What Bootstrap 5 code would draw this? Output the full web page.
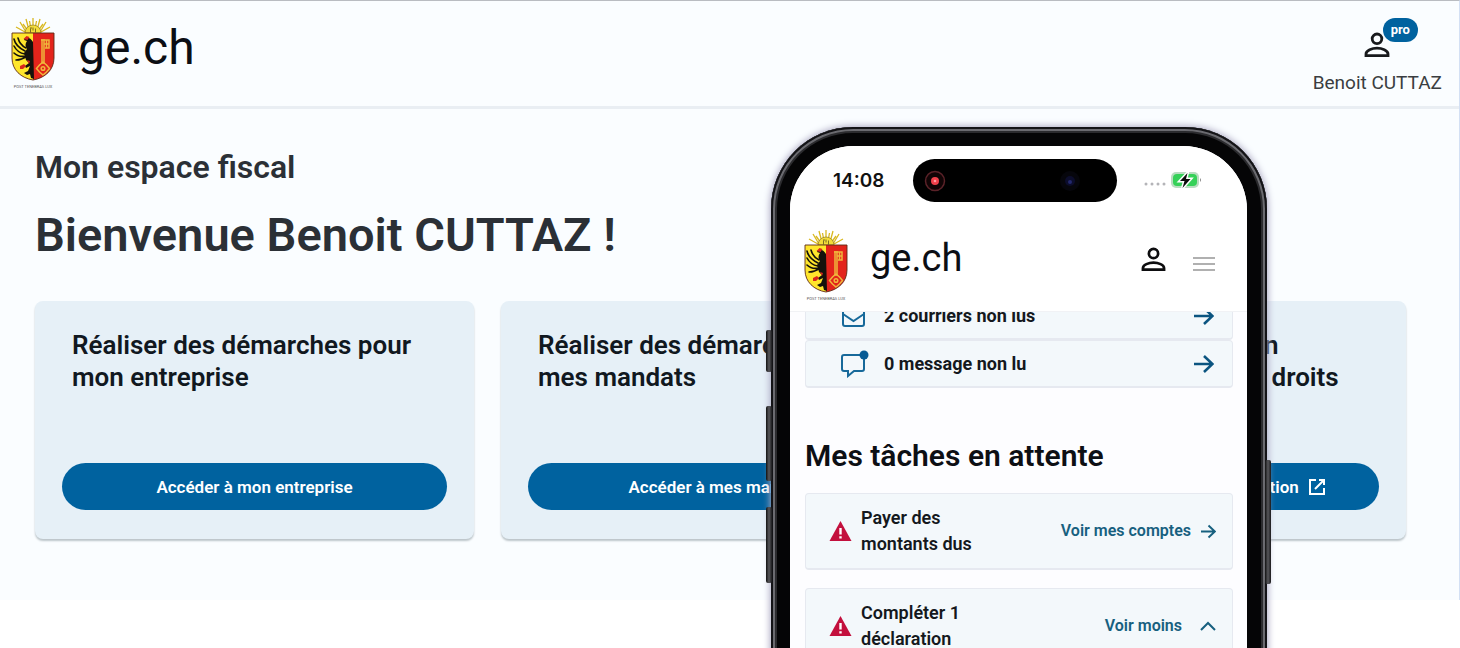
<!DOCTYPE html>
<html lang="fr">
<head>
<meta charset="utf-8">
<meta name="viewport" content="width=device-width, initial-scale=1">
<title>Mon espace fiscal</title>
<link href="https://cdn.jsdelivr.net/npm/bootstrap@5.3.0/dist/css/bootstrap.min.css" rel="stylesheet">
<style>
  :root { --blue: #00629f; --link: #17607f; }
  body { font-family: Roboto, "Liberation Sans", sans-serif; background: #fff; color: #11181f; }
  .stage { min-height: 100vh; }
  .desktop { background: #fafdff; border-top: 1px solid #b9bcc1; border-right: 1px solid #d3e0f4; padding-bottom: 61px; }
  .topbar { height: 108px; padding: 16px 17px 0 11px; border-bottom: 3px solid #e9eef3; }
  .arms { width: 44px; height: 74px; flex: none; }
  .arms text { font-size: 4px; fill: #555; }
  .wordmark { font-size: 48px; line-height: 62px; color: #0b0e14; margin-left: 23px; }
  .account { color: #3a3d41; font-size: 19px; line-height: 24px; padding-top: 15px; }
  .account svg { margin-bottom: 13px; }
  .pro-tag { left: 70px; top: 1px; height: 24px; padding: 0 8px; border-radius: 12px; background: var(--blue); color: #fff; font-size: 13px; font-weight: 700; line-height: 23px; }
  .space { padding: 38px 53px 0 35px; }
  .space h2 { font-size: 32px; font-weight: 600; line-height: 40px; color: #2b3036; margin-bottom: 20px; }
  .space h1 { font-size: 47px; font-weight: 600; line-height: 56px; color: #2b3036; margin-bottom: 38px; }
  .tiles { gap: 27px; }
  .tile { flex: 1 1 0; min-width: 0; height: 238px; padding: 28px 27px 29px; border-radius: 8px; background: #e6f0f7; box-shadow: 0 2px 2px #bcc5ca; }
  .tile h3 { font-size: 26px; font-weight: 600; line-height: 32px; padding-left: 10px; margin: 0; white-space: nowrap; }
  .tile .btn { --bs-btn-bg: var(--blue); --bs-btn-color: #fff; --bs-btn-hover-bg: #004f82; --bs-btn-hover-color: #fff; height: 47px; border: 0; font-size: 17px; font-weight: 600; line-height: 24px; white-space: nowrap; }

  .phone { right: 193px; top: 127px; width: 496px; height: 620px; padding: 19px 20px 0 19px; border-radius: 82px 82px 0 0; background: #050506;
    box-shadow: inset 0 0 0 2px #131316, inset 0 0 0 4px #6b6b70, inset 0 0 0 6px #2b2b2e, 0 0 7px 1px #a9a6c0; }
  .side-key { width: 6px; border-radius: 2px; background: linear-gradient(90deg, #111, #58585c, #1a1a1c); }
  .key-a { left: -5px; top: 203px; height: 42px; }
  .key-b { left: -5px; top: 279px; height: 75px; }
  .key-c { left: -5px; top: 380px; height: 76px; }
  .key-d { right: -4px; top: 333px; height: 124px; }
  .screen { height: 100%; border-radius: 64px 64px 0 0; background: #fdfdff; }
  .phone-top { height: 166px; background: #fff; border-bottom: 1px solid #f1f2f5; }
  .status { height: 83px; padding: 13px 45px 0 43px; }
  .clock { font-family: Inter, "Liberation Sans", sans-serif; font-size: 19px; font-weight: 600; line-height: 43px; width: 80px; color: #111; }
  .island { width: 204px; height: 43px; border-radius: 22px; background: #000; padding: 0 36px 0 11px; }
  .indicators { width: 58px; height: 42px; margin-left: 27px; }
  .phone-nav { padding: 0 31px 0 14px; }
  .phone-nav .wordmark { font-size: 38px; line-height: 58px; margin-left: 22px; }
  .phone-tools { padding-top: 18px; gap: 26px; }
  .nav-btn { border: 0; background: none; padding: 0; line-height: 0; }
  .feed { padding: 0 14px 0 15px; margin-top: -20px; }
  .entry { background: #f3f8fb; border: 1px solid #e6e9f0; border-bottom-width: 2px; border-radius: 4px; color: #14181d; text-decoration: none; }
  .mailrow { height: 48px; padding: 0 18px 0 33px; font-size: 18px; font-weight: 700; line-height: 24px; }
  .mailrow svg:first-child { margin-right: 13px; }
  .feed h2 { font-size: 30px; font-weight: 600; line-height: 40px; margin: 48px 0 17px; color: #0d0f14; }
  .task { height: 77px; padding: 0 16px 0 23px; margin-bottom: 18px; font-size: 18px; font-weight: 600; line-height: 26px; }
  .task p { width: 130px; margin: 0 0 0 9px; }
  .task a { color: var(--link); font-size: 16px; text-decoration: none; gap: 10px; }
</style>
</head>
<body>
<svg width="0" height="0" class="position-absolute" aria-hidden="true">
  <symbol id="arms" viewBox="0 0 44 74">
    <g stroke="#d9b81f" stroke-width="1.3"><path d="M22 15V1M18.500 15 15 2M25.500 15 29 2M15 15 9 5M29 15 35 5M14 15 5 10M30 15 39 10M20 12 18.500 4M24 12l1.500-8M17 14l-5-7M27 14l5-7"/></g>
    <path d="M14 16a8 8 0 0 1 16 0z" fill="#f3dc3a" stroke="#8e7a22" stroke-width=".7"/>
    <path d="M19.500 15.500v-4M24.500 15.500v-4M19 11h2M22 13.500v-3" stroke="#6e611d" stroke-width=".9"/>
    <path d="M1 16h21v47C10 61 1 53 1 41z" fill="#ffe62c"/>
    <path d="M22 16h21v25c0 12-9 20-21 22z" fill="#e3241b"/>
    <g fill="none" stroke="#15120c" stroke-width="1.600" stroke-linecap="round"><path d="M3 22c1 5 5 9 11 12M7 21c1 4 4 8 8 10M3 29c2 4 5 7 11 8M3 36c3 3 7 4 12 3M5 43c4 0 7-1 11-4"/></g>
    <path d="M22 25c-2-4-5-5-8-4l-1 2 3 1c-2 3-2 5 0 8l-3 4 2 7 3 3-4 3 1 2 4-2-2 5-4 2 3 2 3-1 1 4 3 1z" fill="#15120c"/>
    <path d="m12.500 22 3-3 3 1-2 3zM9 49l4-2 2 2-3 3-3 0zM16 43l3 1-1 3z" fill="#d9271d"/>
    <g fill="none" stroke="#f0b63c" stroke-width="1.500"><path d="M31 22v25M33 22v25M30 23h8v8h-4M33 27h5M35.500 23v8"/><path d="m32 45 3.500 3 3 3.500-3 3.500-3.500 3-3.500-3-3-3.500 3-3.500z"/><circle cx="32" cy="51.500" r="1.800"/></g>
    <path d="M1 16h42v25c0 12-9 20-21 22C10 61 1 53 1 41z" fill="none" stroke="#5d2a16" stroke-width=".9"/>
  </symbol>
  <symbol id="person" viewBox="0 0 26 26"><g fill="none" stroke="currentColor" stroke-width="2.800"><circle cx="13" cy="6.800" r="4.800"/><path d="M2 23.600v-1.600c0-3.400 6-5.800 11-5.800s11 2.400 11 5.800v1.600z"/></g></symbol>
  <symbol id="arrow" viewBox="0 0 20 20"><path d="M0 10h18M10 2l8.500 8-8.500 8" fill="none" stroke="currentColor" stroke-width="2.600"/></symbol>
  <symbol id="warn" viewBox="0 0 22 20"><path d="M11 0 22 20H0z" fill="#c3103d"/><path d="M11 7v6.500M11 15.200v2.400" stroke="#fff" stroke-width="2.400"/></symbol>
</svg>

<div class="stage position-relative overflow-hidden">
  <div class="desktop">
    <header class="topbar d-flex justify-content-between">
      <div class="d-flex align-items-start">
        <svg class="arms overflow-visible" role="img" aria-label="Armoiries de Genève"><use href="#arms"/><text x="22" y="71" text-anchor="middle">POST TENEBRAS LUX</text></svg>
        <span class="wordmark">ge.ch</span>
      </div>
      <div class="account position-relative text-center">
        <svg class="d-block mx-auto" width="26" height="26" color="#17191c"><use href="#person"/></svg>
        <span class="pro-tag position-absolute">pro</span>
        Benoit CUTTAZ
      </div>
    </header>
    <main class="space">
      <h2>Mon espace fiscal</h2>
      <h1>Bienvenue Benoit CUTTAZ !</h1>
      <div class="tiles d-flex">
        <section class="tile d-flex flex-column justify-content-between">
          <h3>Réaliser des démarches pour<br>mon entreprise</h3>
          <button class="btn rounded-pill w-100" type="button">Accéder à mon entreprise</button>
        </section>
        <section class="tile d-flex flex-column justify-content-between">
          <h3>Réaliser des démarches pour<br>mes mandats</h3>
          <button class="btn rounded-pill w-100" type="button">Accéder à mes mandats</button>
        </section>
        <section class="tile d-flex flex-column justify-content-between">
          <h3>Gérer sa représentation<br>et ses délégations des droits</h3>
          <button class="btn rounded-pill w-100 d-flex align-items-center justify-content-center gap-2" type="button">Accéder au service de délégation
            <svg width="20" height="20" viewBox="0 0 20 20" fill="none" stroke="#fff" stroke-width="2"><path d="M9 3H3v14h14v-6M12 3h5v5M17 3l-9 9"/></svg>
          </button>
        </section>
      </div>
    </main>
  </div>

  <div class="phone position-absolute">
    <span class="side-key key-a position-absolute"></span>
    <span class="side-key key-b position-absolute"></span>
    <span class="side-key key-c position-absolute"></span>
    <span class="side-key key-d position-absolute"></span>
    <div class="screen overflow-hidden">
      <div class="phone-top position-relative z-1">
        <div class="status d-flex">
          <span class="clock">14:08</span>
          <div class="island d-flex align-items-center justify-content-between">
            <svg width="22" height="22" viewBox="0 0 22 22"><circle cx="11" cy="11" r="9.500" fill="#100405" stroke="#5a2228" stroke-width="1.500"/><circle cx="11" cy="11" r="4" fill="#f0404a"/><circle cx="11" cy="11" r="1.300" fill="#ff9aa0"/></svg>
            <svg width="22" height="22" viewBox="0 0 22 22"><circle cx="11" cy="11" r="10" fill="#06060c"/><circle cx="11" cy="11" r="5" fill="#0c0d2c"/><circle cx="11" cy="12" r="2" fill="#23286e"/></svg>
          </div>
          <svg class="indicators" viewBox="0 0 58 42" role="img" aria-label="Batterie en charge">
            <g fill="#b4b4b8"><circle cx="2" cy="25" r="1.500"/><circle cx="8" cy="25" r="1.500"/><circle cx="14" cy="25" r="1.500"/><circle cx="20" cy="25" r="1.500"/></g>
            <rect x="27" y="13" width="28" height="16" rx="5" fill="#b9dcc0"/><rect x="29" y="15" width="24" height="12" rx="4" fill="#35d158"/><path d="M56 19v4q2-2 0-4z" fill="#888"/>
            <path d="M43.500 14 36 22h4.500l-2 7L46.500 20H42z" fill="#0b0d0b" stroke="#fff" stroke-width="3" paint-order="stroke"/>
          </svg>
        </div>
        <div class="phone-nav d-flex align-items-start">
          <svg class="arms overflow-visible" role="img" aria-label="Armoiries de Genève"><use href="#arms"/><text x="22" y="71" text-anchor="middle">POST TENEBRAS LUX</text></svg>
          <span class="wordmark">ge.ch</span>
          <div class="phone-tools d-flex align-items-start ms-auto">
            <button class="nav-btn" type="button" aria-label="Mon compte"><svg width="25" height="25" color="#0d0d0f"><use href="#person"/></svg></button>
            <button class="nav-btn pt-2" type="button" aria-label="Menu"><svg width="24" height="18" viewBox="0 0 24 18"><path d="M1 3h22M1 9h22M1 15h22" stroke="#b0b0b0" stroke-width="2"/></svg></button>
          </div>
        </div>
      </div>
      <div class="feed">
        <a class="entry mailrow d-flex align-items-center" href="#">
          <svg width="32" height="26" viewBox="0 0 32 26" fill="none" stroke="#17699a" stroke-width="2"><rect x="4" y="4" width="21" height="19" rx="2"/><path d="m4 11 10.500 7L25 11"/></svg>
          2 courriers non lus
          <svg class="ms-auto" width="20" height="20" color="#0b5480"><use href="#arrow"/></svg>
        </a>
        <a class="entry mailrow d-flex align-items-center" href="#">
          <svg width="32" height="28" viewBox="0 0 32 28" fill="none" stroke="#17699a" stroke-width="2"><path d="M21 5H5q-2 0-2 2v12q0 2 2 2h4v5l6-5h8q2 0 2-2V9"/><circle cx="25" cy="5" r="4.500" fill="#075b95" stroke="none"/></svg>
          0 message non lu
          <svg class="ms-auto" width="20" height="20" color="#0b5480"><use href="#arrow"/></svg>
        </a>
        <h2>Mes tâches en attente</h2>
        <div class="entry task d-flex align-items-center">
          <svg width="23" height="20"><use href="#warn"/></svg>
          <p>Payer des montants dus</p>
          <a class="d-flex align-items-center ms-auto" href="#">Voir mes comptes <svg width="15" height="15"><use href="#arrow"/></svg></a>
        </div>
        <div class="entry task d-flex align-items-center">
          <svg width="23" height="20"><use href="#warn"/></svg>
          <p>Compléter 1 déclaration</p>
          <a class="d-flex align-items-center ms-auto" href="#"><span class="me-2">Voir moins</span><svg width="16" height="10" viewBox="0 0 16 10"><path d="m1 9 7-7 7 7" fill="none" stroke="currentColor" stroke-width="2"/></svg></a>
        </div>
      </div>
    </div>
  </div>
</div>
<script src="https://cdn.jsdelivr.net/npm/bootstrap@5.3.0/dist/js/bootstrap.bundle.min.js"></script>
</body>
</html>
